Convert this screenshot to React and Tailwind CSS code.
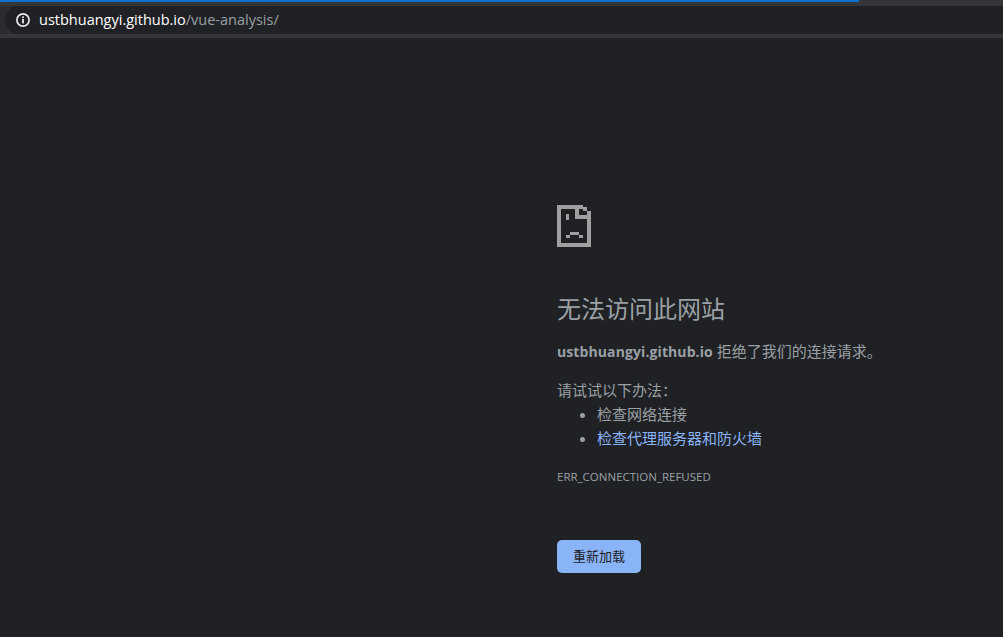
import React from 'react';

const font = { fontFamily: '"Open Sans", "Noto Sans CJK SC", sans-serif' };

// pixel sad-file icon from the browser error page
const SadFile = () => (
  <svg width="34" height="42" viewBox="0 0 34 42" fill="#a0a0a0" shapeRendering="crispEdges">
    <path d="M0 0h26v2h4v4h4v36H0zM4 4v34h26V14H18V4zM22 4v6h8V6h-4V4z" fillRule="evenodd" />
    <rect x="9" y="9" width="3" height="6" />
    <rect x="13" y="27" width="9" height="3" />
    <rect x="9" y="30" width="4" height="3" />
    <rect x="22" y="30" width="4" height="3" />
  </svg>
);

export default function App() {
  return (
    <div className="flex h-[637px] w-[1003px] flex-col overflow-hidden bg-[#202124]" style={font}>
      <div className="h-[6px] bg-[#35363a]">
        <div className="h-[2px] w-[859px] bg-[#0b72d0]" />
      </div>
      <div className="flex h-[28px] items-center bg-[#2b2c2f] pl-[5px]">
        <div className="flex h-full flex-1 items-center rounded-l-full bg-[#202124] pl-[11px]">
          <svg width="14" height="14" viewBox="0 0 14 14" fill="none">
            <circle cx="7" cy="7" r="6.1" stroke="#e8eaed" strokeWidth="1.7" />
            <rect x="6.1" y="6" width="1.8" height="4.4" fill="#e8eaed" />
            <rect x="6.1" y="3.4" width="1.8" height="1.7" fill="#e8eaed" />
          </svg>
          <span className="ml-[9px] text-[14.5px] leading-none text-white">
            ustbhuangyi.github.io<span className="text-[#9aa0a6]">/vue-analysis/</span>
          </span>
        </div>
      </div>
      <div className="h-[4px] bg-[#35363a]" />
      <main className="flex flex-col pl-[557px] pt-[167px]">
        <SadFile />
        <h1 className="mt-[47px] text-[24px] leading-[30px] font-normal text-[#9aa0a6]">无法访问此网站</h1>
        <p className="mt-[15px] text-[15px] leading-[24px] text-[#9aa0a6]">
          <strong className="text-[14px] font-bold tracking-[0.1px]">ustbhuangyi.github.io</strong> 拒绝了我们的连接请求。
        </p>
        <p className="mt-[14px] text-[15px] leading-[24px] text-[#9aa0a6]">请试试以下办法：</p>
        <ul className="list-disc pl-[40px] text-[15px] leading-[24px] text-[#9aa0a6]">
          <li>检查网络连接</li>
          <li><span className="text-[#8ab4f8]">检查代理服务器和防火墙</span></li>
        </ul>
        <div className="mt-[19px] text-[11.5px] leading-[16px] text-[#9aa0a6]">ERR_CONNECTION_REFUSED</div>
        <button className="mt-[55px] h-[33px] w-[84px] rounded-[5px] bg-[#8ab4f8] text-[13px] text-[#202124]">
          重新加载
        </button>
      </main>
    </div>
  );
}
